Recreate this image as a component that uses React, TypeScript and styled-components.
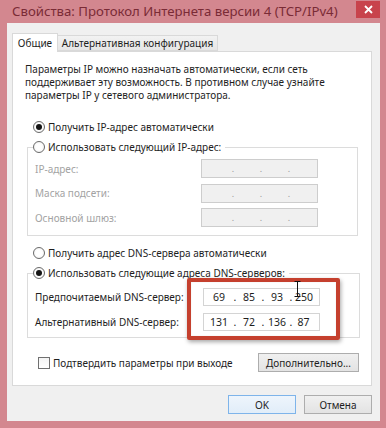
import React from "react";
import styled, { createGlobalStyle } from "styled-components";

const Global = createGlobalStyle`
  html, body { margin: 0; padding: 0; background: #d3878f; }
  * { box-sizing: border-box; }
`;

const FONT = `"Noto Sans", "Liberation Sans", sans-serif`;

const Window = styled.div`
  position: relative;
  width: 386px;
  height: 428px;
  background: #d3878f;
  display: flex;
  flex-direction: column;
  overflow: hidden;
  font-family: ${FONT};
  font-size: 10px;
  color: #1e1e1e;
`;

const TitleBar = styled.div`
  height: 23px;
  display: flex;
  align-items: flex-start;
  padding-left: 12px;
`;

const Title = styled.div`
  font-size: 13.2px;
  line-height: 23px;
  color: #7a2b36;
  white-space: nowrap;
`;

const CloseBtn = styled.div`
  margin-left: auto;
  margin-right: 6px;
  margin-top: 1px;
  width: 24px;
  height: 17px;
  background: #c8434c;
  display: flex;
  align-items: center;
  justify-content: center;
`;

const Client = styled.div`
  margin: 0 6px 7px 7px;
  flex: 1;
  background: #f0f0f0;
  padding: 10px 8px 0 5px;
  display: flex;
  flex-direction: column;
`;

const TabRow = styled.div`
  display: flex;
  align-items: flex-end;
  height: 18px;
  position: relative;
  z-index: 1;
`;

const Tab = styled.div<{ $active?: boolean }>`
  height: ${(p) => (p.$active ? "19px" : "16px")};
  margin-bottom: ${(p) => (p.$active ? "-1px" : "0")};
  width: ${(p) => (p.$active ? "46px" : "161px")};
  margin-left: ${(p) => (p.$active ? "0" : "-1px")};
  border: 1px solid #d9d9d9;
  border-bottom: ${(p) => (p.$active ? "none" : "1px solid #d9d9d9")};
  background: ${(p) => (p.$active ? "#ffffff" : "linear-gradient(#f2f2f2, #e6e6e6)")};
  display: flex;
  align-items: center;
  justify-content: center;
  white-space: nowrap;
  padding-bottom: ${(p) => (p.$active ? "1px" : "0")};
`;

const TabPage = styled.div`
  height: 335px;
  background: #ffffff;
  border: 1px solid #d9d9d9;
  padding: 11px 12px 0 12px;
  display: flex;
  flex-direction: column;
`;

const Desc = styled.p`
  margin: 0;
  line-height: 13px;
  height: 39px;
`;

const OptionRow = styled.label<{ $mt: number; $ml?: number }>`
  display: flex;
  align-items: center;
  height: 16px;
  gap: 3px;
  margin-top: ${(p) => p.$mt}px;
  margin-left: ${(p) => p.$ml ?? 8}px;
  white-space: nowrap;
`;

const RadioDot = styled.span<{ $checked?: boolean }>`
  width: 12px;
  height: 12px;
  border-radius: 50%;
  border: 1px solid #6a6a6a;
  background: radial-gradient(circle, #ffffff 40%, #ececec 100%);
  display: flex;
  align-items: center;
  justify-content: center;
  flex: none;
  &::after {
    content: "";
    width: 6px;
    height: 6px;
    border-radius: 50%;
    background: ${(p) => (p.$checked ? "#141414" : "transparent")};
  }
`;

const Group = styled.fieldset<{ $mt: number; $mr: number; $pb: number }>`
  margin: ${(p) => p.$mt}px ${(p) => p.$mr}px 0 2px;
  padding: 0 39px ${(p) => p.$pb}px 5px;
  border: 1px solid #dcdcdc;
  min-width: 0;
`;

const Legend = styled.legend`
  padding: 0 4px 0 0;
  margin: 0;
  height: 16px;
  display: flex;
  align-items: center;
  gap: 3px;
  white-space: nowrap;
`;

const Rows = styled.div<{ $mt: number; $gap: number }>`
  display: flex;
  flex-direction: column;
  gap: ${(p) => p.$gap}px;
  margin-top: ${(p) => p.$mt}px;
`;

const FieldRow = styled.div`
  display: grid;
  grid-template-columns: 1fr 117px;
  align-items: center;
`;

const FieldLabel = styled.span<{ $disabled?: boolean }>`
  padding-left: 2px;
  color: ${(p) => (p.$disabled ? "#a3a3a3" : "#1e1e1e")};
  white-space: nowrap;
`;

const IpBox = styled.div<{ $disabled?: boolean; $h: number }>`
  height: ${(p) => p.$h}px;
  border: 1px solid ${(p) => (p.$disabled ? "#cdcdcd" : "#d4d4d4")};
  background: ${(p) => (p.$disabled ? "#f0f0f0" : "#ffffff")};
  padding-left: 3px;
  display: grid;
  grid-template-columns: 24px 8px 20px 8px 20px 8px 17px;
  align-items: center;
  color: ${(p) => (p.$disabled ? "#9a9a9a" : "#1e1e1e")};
  font-size: ${(p) => (p.$disabled ? "9px" : "10.5px")};
  text-align: center;
`;

const BottomRow = styled.div`
  margin-top: 15px;
  height: 19px;
  display: flex;
  align-items: center;
  justify-content: space-between;
`;

const CheckLabel = styled.label`
  display: flex;
  align-items: center;
  gap: 3px;
  margin-left: 13px;
  white-space: nowrap;
`;

const CheckBox = styled.span`
  width: 12px;
  height: 12px;
  border: 1px solid #707070;
  background: linear-gradient(#f4f4f4, #ffffff);
  flex: none;
`;

const Button = styled.div<{ $w: number; $default?: boolean }>`
  width: ${(p) => p.$w}px;
  height: 19px;
  border: 1px solid ${(p) => (p.$default ? "#7eb4ea" : "#adadad")};
  background: ${(p) => (p.$default ? "linear-gradient(#eef5fc, #e1edf9)" : "linear-gradient(#f0f0f0, #e3e3e3)")};
  display: flex;
  align-items: center;
  justify-content: center;
  white-space: nowrap;
`;

const Footer = styled.div`
  margin-top: 9px;
  display: flex;
  justify-content: flex-end;
  gap: 8px;
`;

const Highlight = styled.div`
  position: absolute;
  left: 187px;
  top: 278px;
  width: 153px;
  height: 62px;
  border: 4px solid #c5402e;
  border-radius: 2px;
  box-shadow: 1px 2px 4px rgba(0, 0, 0, 0.35), inset 0 0 1px rgba(0, 0, 0, 0.2);
  pointer-events: none;
`;

const Cursor = styled.svg`
  position: absolute;
  left: 294px;
  top: 281px;
`;

const ipCells = (vals: string[]) => {
  const out: React.ReactNode[] = [];
  vals.forEach((v, i) => {
    out.push(<span key={"v" + i}>{v}</span>);
    if (i < 3) out.push(<span key={"d" + i}>.</span>);
  });
  return out;
};

export default function App() {
  return (
    <>
      <Global />
      <Window>
        <TitleBar>
          <Title>Свойства: Протокол Интернета версии 4 (TCP/IPv4)</Title>
          <CloseBtn>
            <svg width="9" height="9" viewBox="0 0 9 9">
              <path d="M1 1 L8 8 M8 1 L1 8" stroke="#ffffff" strokeWidth="1.8" />
            </svg>
          </CloseBtn>
        </TitleBar>
        <Client>
          <TabRow>
            <Tab $active>Общие</Tab>
            <Tab>Альтернативная конфигурация</Tab>
          </TabRow>
          <TabPage>
            <Desc>
              Параметры IP можно назначать автоматически, если сеть
              <br />
              поддерживает эту возможность. В противном случае узнайте
              <br />
              параметры IP у сетевого администратора.
            </Desc>
            <OptionRow $mt={17}>
              <RadioDot $checked />
              Получить IP-адрес автоматически
            </OptionRow>
            <Group $mt={4} $mr={1} $pb={8}>
              <Legend>
                <RadioDot />
                Использовать следующий IP-адрес:
              </Legend>
              <Rows $mt={4} $gap={5.5}>
                {["IP-адрес:", "Маска подсети:", "Основной шлюз:"].map((l) => (
                  <FieldRow key={l}>
                    <FieldLabel $disabled>{l}</FieldLabel>
                    <IpBox $disabled $h={19}>{ipCells(["", "", "", ""])}</IpBox>
                  </FieldRow>
                ))}
              </Rows>
            </Group>
            <OptionRow $mt={9}>
              <RadioDot />
              Получить адрес DNS-сервера автоматически
            </OptionRow>
            <Group $mt={4} $mr={-1} $pb={6}>
              <Legend>
                <RadioDot $checked />
                Использовать следующие адреса DNS-серверов:
              </Legend>
              <Rows $mt={7} $gap={7}>
                <FieldRow>
                  <FieldLabel>Предпочитаемый DNS-сервер:</FieldLabel>
                  <IpBox $h={18}>{ipCells(["69", "85", "93", "250"])}</IpBox>
                </FieldRow>
                <FieldRow>
                  <FieldLabel>Альтернативный DNS-сервер:</FieldLabel>
                  <IpBox $h={18}>{ipCells(["131", "72", "136", "87"])}</IpBox>
                </FieldRow>
              </Rows>
            </Group>
            <BottomRow>
              <CheckLabel>
                <CheckBox />
                Подтвердить параметры при выходе
              </CheckLabel>
              <Button $w={101}>Дополнительно...</Button>
            </BottomRow>
          </TabPage>
          <Footer>
            <Button $w={68} $default>OK</Button>
            <Button $w={68}>Отмена</Button>
          </Footer>
        </Client>
        <Highlight />
        <Cursor width="7" height="16" viewBox="0 0 7 16">
          <path d="M0.5 0.5 H6.5 M3.5 0.5 V15.5 M0.5 15.5 H6.5" stroke="#111" strokeWidth="1" fill="none" />
        </Cursor>
      </Window>
    </>
  );
}
